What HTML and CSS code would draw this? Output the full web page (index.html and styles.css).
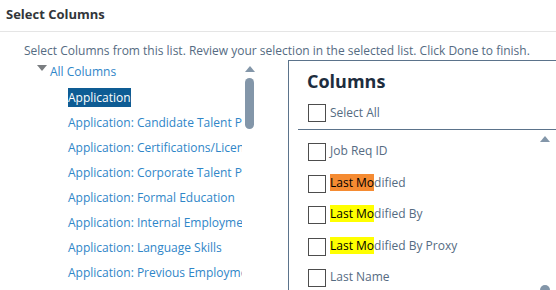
FILE: index.html
```html
<!DOCTYPE html>
<html lang="en">
<head>
    <meta charset="UTF-8">
    <title>Select Columns</title>
    <link rel="stylesheet" href="styles.css">
</head>
<body>
    <header class="dialog-title">Select Columns</header>

    <p class="intro">Select Columns from this list. Review your selection in the selected list. Click Done to finish.</p>

    <div class="dialog-body">
        <div class="source">
            <div class="tree">
                <div class="tree-root">
                    <span class="caret"></span>
                    <span class="tree-link">All Columns</span>
                </div>
                <ul class="tree-list">
                    <li><span class="selected">Application</span></li>
                    <li>Application: Candidate Talent Pool</li>
                    <li>Application: Certifications/Licenses</li>
                    <li>Application: Corporate Talent Pool</li>
                    <li>Application: Formal Education</li>
                    <li>Application: Internal Employment</li>
                    <li>Application: Language Skills</li>
                    <li>Application: Previous Employment</li>
                </ul>
            </div>
            <div class="vscroll">
                <span class="arrow-up"></span>
                <span class="thumb"></span>
            </div>
        </div>

        <div class="panel">
            <h2>Columns</h2>
            <label class="check-row select-all">
                <span class="box"></span>
                <span>Select All</span>
            </label>
            <div class="panel-list">
                <ul class="columns">
                    <li class="check-row"><span class="box"></span><span>Job Req ID</span></li>
                    <li class="check-row"><span class="box"></span><span><mark class="current">Last Mo</mark>dified</span></li>
                    <li class="check-row"><span class="box"></span><span><mark>Last Mo</mark>dified By</span></li>
                    <li class="check-row"><span class="box"></span><span><mark>Last Mo</mark>dified By Proxy</span></li>
                    <li class="check-row"><span class="box"></span><span>Last Name</span></li>
                </ul>
                <div class="vscroll right">
                    <span class="arrow-up"></span>
                    <span class="thumb-end"></span>
                </div>
            </div>
        </div>
    </div>
</body>
</html>
```

FILE: styles.css
```css
* {
    margin: 0;
    padding: 0;
    box-sizing: border-box;
}

html, body {
    height: 100%;
    overflow: hidden;
}

body {
    background-color: #fff;
    font-family: 'Open Sans', 'Noto Sans', sans-serif;
    font-size: 12px;
    color: #556b82;
}

.dialog-title {
    height: 32px;
    padding: 5px 0 0 6px;
    font-size: 13px;
    font-weight: bold;
    color: #32363a;
    border-bottom: 1px solid #e5e5e5;
}

.intro {
    padding: 10px 0 0 24px;
    line-height: 17px;
    white-space: nowrap;
}

.dialog-body {
    display: flex;
    margin-top: 1px;
}

/* left tree */

.source {
    width: 288px;
    display: flex;
    flex-shrink: 0;
}

.tree {
    width: 242px;
    padding-left: 37px;
    overflow: hidden;
    white-space: nowrap;
    color: #2f86c8;
}

.tree-root {
    display: flex;
    align-items: center;
    height: 22px;
}

.caret {
    width: 0;
    height: 0;
    border-left: 5px solid transparent;
    border-right: 5px solid transparent;
    border-top: 6px solid #7a7d80;
    margin: 0 3px 6px 0;
}

.tree-list {
    list-style: none;
    padding: 3px 0 0 31px;
}

.tree-list li {
    height: 25px;
    line-height: 25px;
}

.selected {
    background-color: #0e5c94;
    color: #fff;
    padding: 1px 0;
}

.vscroll {
    width: 9px;
    margin-left: 3px;
    display: flex;
    flex-direction: column;
    align-items: center;
}

.arrow-up {
    width: 0;
    height: 0;
    border-left: 5px solid transparent;
    border-right: 5px solid transparent;
    border-bottom: 6px solid #8396a9;
    margin-top: 6px;
}

.thumb {
    width: 9px;
    height: 51px;
    margin-top: 6px;
    border-radius: 5px;
    background-color: #8396a9;
}

/* right panel */

.panel {
    flex: 1;
    height: 240px;
    border-left: 1px solid #5b738b;
    border-top: 1px solid #5b738b;
    padding-top: 8px;
}

.panel h2 {
    padding-left: 18px;
    font-size: 18px;
    font-weight: bold;
    color: #1d2d3e;
    line-height: 24px;
}

.check-row {
    display: flex;
    align-items: center;
    gap: 4px;
    padding-left: 19px;
}

.box {
    width: 18px;
    height: 18px;
    border: 1px solid #4d4d4d;
    background-color: #fff;
    flex-shrink: 0;
}

.select-all {
    height: 30px;
    margin: 7px 0 0 9px;
    padding: 0 0 4px 10px;
    border-bottom: 1px solid #5b738b;
}

.panel-list {
    display: flex;
}

.columns {
    flex: 1;
    list-style: none;
    padding-top: 13px;
}

.columns li {
    height: 31.5px;
    align-items: flex-start;
}

.columns li span:last-child {
    line-height: 17px;
    margin-top: -1px;
}

mark {
    background-color: #ffff00;
    color: #000;
}

mark.current {
    background-color: #f58b32;
}

.vscroll.right {
    width: 10px;
    margin: 0 6px 0 0;
    justify-content: space-between;
    height: 161px;
}

.thumb-end {
    width: 10px;
    height: 6px;
    border-radius: 5px 5px 0 0;
    background-color: #8396a9;
}
```
